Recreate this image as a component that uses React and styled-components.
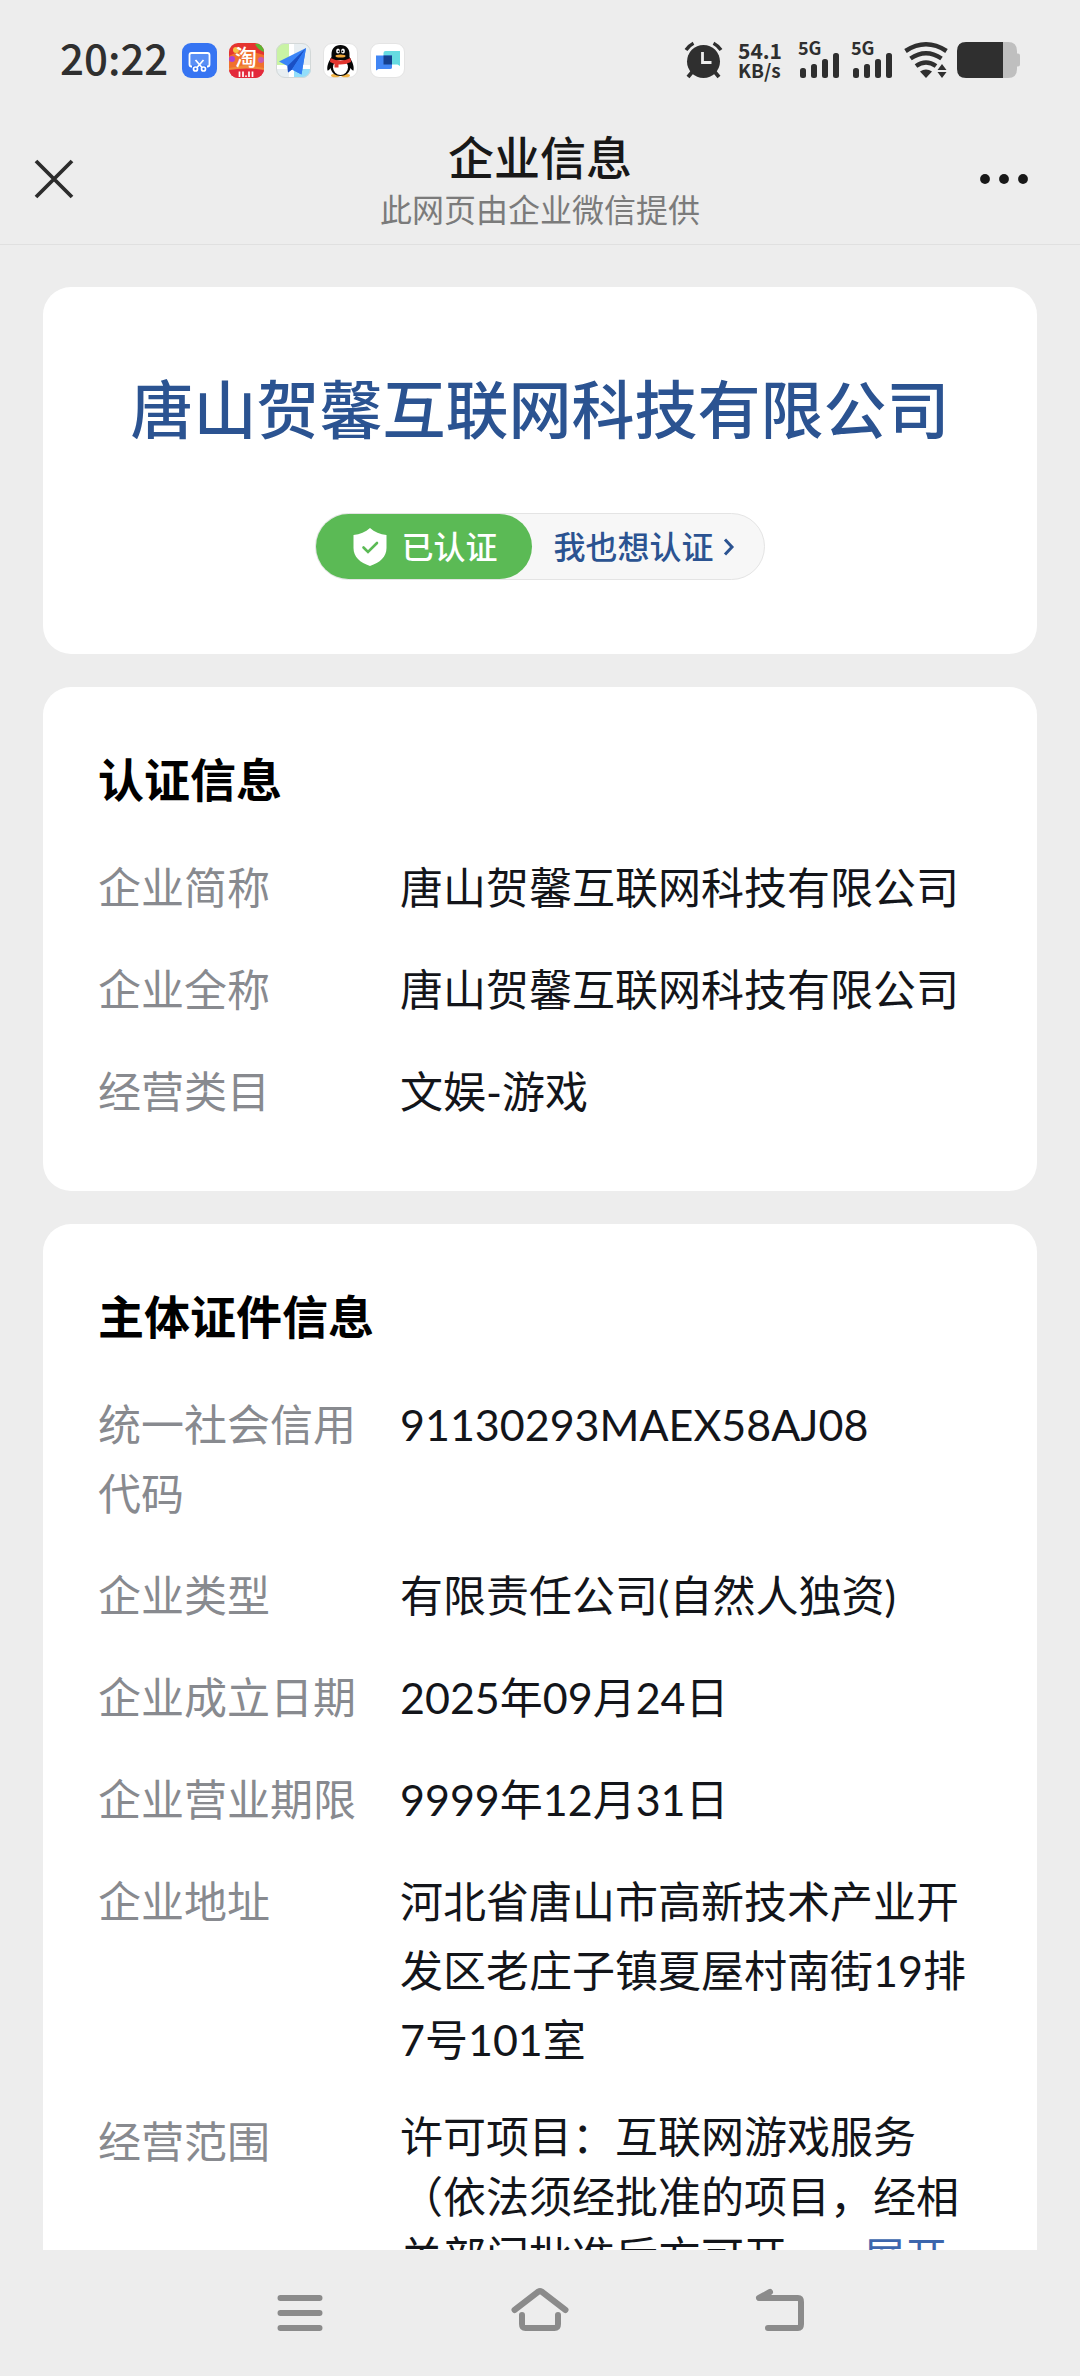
import React from "react"
import styled, { createGlobalStyle } from "styled-components"

const certRows = [
  { label: "企业简称", value: "唐山贺馨互联网科技有限公司" },
  { label: "企业全称", value: "唐山贺馨互联网科技有限公司" },
  { label: "经营类目", value: "文娱-游戏" }
]

const licenseRows = [
  { label: "统一社会信用代码", value: "91130293MAEX58AJ08" },
  { label: "企业类型", value: "有限责任公司(自然人独资)" },
  { label: "企业成立日期", value: "2025年09月24日" },
  { label: "企业营业期限", value: "9999年12月31日" },
  {
    label: "企业地址",
    value: "河北省唐山市高新技术产业开发区老庄子镇夏屋村南街19排7号101室"
  },
  {
    label: "经营范围",
    value:
      "许可项目：互联网游戏服务（依法须经批准的项目，经相关部门批准后方可开…",
    more: true
  }
]

export default function App() {
  return (
    <Screen>
      <GlobalStyle />
      <StatusBar>
        <Time>20:22</Time>
        <AppIcons>
          <ScreenshotIcon />
          <TaobaoIcon />
          <MapIcon />
          <QQIcon />
          <MeetingIcon />
        </AppIcons>
        <AlarmIcon />
        <NetSpeed>
          <span>54.1</span>
          <SpeedUnit>KB/s</SpeedUnit>
        </NetSpeed>
        <Signals>
          <SignalIcon />
          <SignalIcon />
          <WifiIcon />
        </Signals>
        <BatteryIcon />
      </StatusBar>

      <NavBar>
        <NavButton aria-label="关闭">
          <svg width="38" height="38" viewBox="0 0 38 38">
            <path d="M1 1 37 37M37 1 1 37" stroke="#2c2c2c" strokeWidth="3.8" />
          </svg>
        </NavButton>
        <Titles>
          <PageTitle>企业信息</PageTitle>
          <PageSource>此网页由企业微信提供</PageSource>
        </Titles>
        <NavButton aria-label="更多" $end>
          <svg width="50" height="12" viewBox="0 0 50 12" fill="#181818">
            <circle cx="6" cy="6" r="4.9" />
            <circle cx="25" cy="6" r="4.9" />
            <circle cx="44" cy="6" r="4.9" />
          </svg>
        </NavButton>
      </NavBar>

      <Content>
        <CompanyCard>
          <CompanyName>唐山贺馨互联网科技有限公司</CompanyName>
          <VerifyPill>
            <Verified>
              <ShieldIcon />
              已认证
            </Verified>
            <VerifyLink href="#verify">
              我也想认证
              <svg width="10" height="18" viewBox="0 0 10 18" fill="none">
                <path d="M1 1.5 8 9 1 16.5" stroke="#2b5391" strokeWidth="3" />
              </svg>
            </VerifyLink>
          </VerifyPill>
        </CompanyCard>
        <InfoSection title="认证信息" rows={certRows} />
        <InfoSection title="主体证件信息" rows={licenseRows} />
      </Content>

      <SystemNav>
        <SystemButton aria-label="最近任务">
          <svg width="60" height="48" viewBox="0 0 60 48">
            <path d="M10.500 9H49.500M10.500 24H49.500M10.500 39H49.500" />
          </svg>
        </SystemButton>
        <SystemButton aria-label="主屏幕">
          <svg width="60" height="48" viewBox="0 0 60 48">
            <path d="M4.500 21 28.500 2.500Q30 1.500 31.500 2.500L55.500 21" />
            <path d="M12 26V35Q12 39 15.500 39H44.500Q48 39 48 35V26" />
          </svg>
        </SystemButton>
        <SystemButton aria-label="返回">
          <svg width="60" height="48" viewBox="0 0 60 48">
            <path d="M20 3 9 9H48Q51 9 51 13V35Q51 39 48 39H18" />
          </svg>
        </SystemButton>
      </SystemNav>
    </Screen>
  )
}

function InfoSection({ title, rows }) {
  return (
    <InfoCard>
      <SectionTitle>{title}</SectionTitle>
      <Rows>
        {rows.map(row => (
          <Row key={row.label}>
            <Label>{row.label}</Label>
            <Value $dense={row.more}>
              {row.value}
              {row.more && <MoreLink href="#scope">展开</MoreLink>}
            </Value>
          </Row>
        ))}
      </Rows>
    </InfoCard>
  )
}

function ShieldIcon() {
  return (
    <svg width="34" height="38" viewBox="0 0 34 38">
      <path
        d="M17 0C21.500 4 27 6.500 33.500 7V20C33.500 29 27 34.500 17 38 7 34.500.5 29 .5 20V7C7 6.500 12.500 4 17 0Z"
        fill="#fff"
      />
      <path
        d="M10.500 19.500 15 24 24 15"
        fill="none"
        stroke="#5bba55"
        strokeWidth="2.600"
        strokeLinecap="round"
      />
    </svg>
  )
}

function ScreenshotIcon() {
  return (
    <svg width="35" height="35" viewBox="0 0 35 35">
      <rect width="35" height="35" rx="9" fill="#3674f2" />
      <rect x="8" y="10.500" width="19" height="12" fill="#5a8ff5" />
      <path
        d="M10 23.500H9.500Q7.500 23.500 7.500 21.500V12Q7.500 10 9.500 10H25.500Q27.500 10 27.500 12V21.500Q27.500 23.500 25.500 23.500H25"
        fill="none"
        stroke="#fff"
        strokeWidth="1.800"
      />
      <g fill="none" stroke="#fff" strokeWidth="1.700">
        <path d="M13.500 17 20 24.500M21.500 17 15 24.500" />
        <circle cx="13.500" cy="26" r="2" />
        <circle cx="21.500" cy="26" r="2" />
      </g>
    </svg>
  )
}

function TaobaoIcon() {
  return (
    <svg width="35" height="35" viewBox="0 0 35 35">
      <defs>
        <clipPath id="tb">
          <rect width="35" height="35" rx="9" />
        </clipPath>
      </defs>
      <g clipPath="url(#tb)">
        <rect width="35" height="35" fill="#e5342f" />
        <path d="M0 13 14 6 35 12V26H0Z" fill="#f0702d" />
        <circle cx="7" cy="7" r="3" fill="#f6c445" />
        <path d="M26 1 35 0V9Q29 7 26 1Z" fill="#5cb531" />
        <circle cx="3" cy="16" r="3" fill="#b13fd0" />
        <circle cx="32" cy="17" r="3" fill="#c95bb0" />
        <path d="M0 25 17 22 35 25V28H0Z" fill="#f08b3a" />
        <path d="M0 27Q17 24 35 27V35H0Z" fill="#e32a3c" />
      </g>
      <IconText x="17" y="22" fontSize="22">
        淘
      </IconText>
      <path
        d="M10.500 28.500V34M14 28.500V34M20 28.500V34M23.500 28.500V34"
        stroke="#fff"
        strokeWidth="1.700"
      />
      <circle cx="17" cy="33.2" r=".9" fill="#fff" />
    </svg>
  )
}

function MapIcon() {
  return (
    <svg width="35" height="35" viewBox="0 0 35 35">
      <defs>
        <clipPath id="map">
          <rect width="35" height="35" rx="9" />
        </clipPath>
      </defs>
      <g clipPath="url(#map)">
        <rect width="35" height="35" fill="#e8eef1" />
        <path d="M0 0H13V22H0Z" fill="#c9f3a4" />
        <path d="M18 26H35V35H18Z" fill="#93defa" />
        <path d="M13 0H18V35H13Z" fill="#fff" />
        <path d="M0 22H35V26H0Z" fill="#fff" />
        <path d="M30 5 3 18.500 11.500 23 12 29.500 16 26.500 25.500 31.500Z" fill="#3a84f7" />
        <path d="M30 5 11.500 23 12 29.500 16 26.500Z" fill="#1a4fc4" />
        <path d="M30 5 16 26.500 25.500 31.500Z" fill="#327bf3" />
      </g>
      <rect x=".5" y=".5" width="34" height="34" rx="8.500" fill="none" stroke="#d3d8d8" />
    </svg>
  )
}

function QQIcon() {
  return (
    <svg width="35" height="35" viewBox="0 0 35 35">
      <rect x=".5" y=".5" width="34" height="34" rx="8.500" fill="#fff" stroke="#e4e4e4" />
      <ellipse cx="12.500" cy="32.500" rx="4.500" ry="1.800" fill="#f2b445" />
      <ellipse cx="22.500" cy="32.500" rx="4.500" ry="1.800" fill="#f2b445" />
      <path
        d="M17.500 2C11.500 2 8.500 6 8.500 11V14C6 18 3.500 23 4.500 27.500 5.500 28 6.500 26.500 7.500 25 8.500 30 12.500 33 17.500 33S26.500 30 27.500 25C28.500 26.500 29.500 28 30.500 27.500 31.500 23 29 18 26.500 14V11C26.500 6 23.500 2 17.500 2Z"
        fill="#070707"
      />
      <ellipse cx="17.500" cy="24.500" rx="7.500" ry="7.500" fill="#fff" />
      <ellipse cx="15" cy="8" rx="1.900" ry="2.600" fill="#fff" />
      <ellipse cx="20" cy="8" rx="1.900" ry="2.600" fill="#fff" />
      <circle cx="15.500" cy="8.300" r=".9" fill="#000" />
      <circle cx="19.500" cy="8.300" r=".9" fill="#000" />
      <ellipse cx="17.500" cy="13" rx="5" ry="1.500" fill="#f2a93b" />
      <path d="M7.500 15Q17.500 20 27.500 15L28 19Q22 22 15.500 21.500V24.500H11.500V21L7 19Z" fill="#e2352f" />
    </svg>
  )
}

function MeetingIcon() {
  return (
    <svg width="35" height="35" viewBox="0 0 35 35">
      <rect x=".5" y=".5" width="34" height="34" rx="8.500" fill="#fff" stroke="#e4e4e4" />
      <path d="M13.500 10Q13.500 8 15.500 8H30V23L27.500 21.500H13.500Z" fill="#66dbe1" />
      <path d="M6 12.500H22V24.500Q22 26 20 26H8.500L6 27.500Z" fill="#4186f4" />
      <path d="M13.500 12.500H22V21.500H13.500Z" fill="#15408e" />
    </svg>
  )
}

function AlarmIcon() {
  return (
    <svg width="37" height="36" viewBox="0 0 37 36">
      <circle cx="18.500" cy="19.500" r="16.500" fill="#2f2f2f" />
      <g fill="none" stroke="#2f2f2f" strokeWidth="3.400">
        <path d="M1 8Q4 3.500 8.500 1.200M28.500 1.200Q33 3.500 36 8" />
        <path d="M8 29 3 35M29 29 34 35" strokeWidth="3.800" />
      </g>
      <path d="M17.500 10V20.500H26.500" fill="none" stroke="#ededed" strokeWidth="2.800" />
    </svg>
  )
}

function SignalIcon() {
  return (
    <svg width="42" height="36" viewBox="0 0 42 36" fill="#2f2f2f">
      <SignalText x="0" y="13">
        5G
      </SignalText>
      <rect x="2" y="26" width="6" height="10" rx="2.500" />
      <rect x="13" y="22" width="6" height="14" rx="2.500" />
      <rect x="24" y="17" width="6" height="19" rx="2.500" />
      <rect x="35" y="11" width="6" height="25" rx="2.500" />
    </svg>
  )
}

function WifiIcon() {
  return (
    <svg width="44" height="36" viewBox="0 0 44 36">
      <g fill="none" stroke="#2f2f2f" strokeWidth="4.500">
        <path d="M1.500 9Q22-4.500 42.500 9" />
        <path d="M6.500 16.500Q22 6 37.500 16.500" />
        <path d="M12 24Q22 17 32 24" />
      </g>
      <path d="M16 29.500Q22 25.500 28 29.500L22 36Z" fill="#2f2f2f" />
      <path d="M38 22 42.500 28H33.500ZM38 36 33.500 30H42.500Z" fill="#2f2f2f" />
    </svg>
  )
}

function BatteryIcon() {
  return (
    <svg width="63" height="36" viewBox="0 0 63 36">
      <path d="M46 0H51Q60 0 60 9V11.500H61Q63 11.500 63 13.500V22.500Q63 24.500 61 24.500H60V27Q60 36 51 36H46Z" fill="#bfbfbf" />
      <path d="M9 0H46V36H9Q0 36 0 27V9Q0 0 9 0Z" fill="#2f2f2f" />
    </svg>
  )
}

const GlobalStyle = createGlobalStyle`
  * {
    box-sizing: border-box;
  }

  body {
    margin: 0;
    background: #ededed;
    font-family: Lato, "Noto Sans CJK SC", sans-serif;
  }

  h1, h2, p, dl, dd {
    margin: 0;
    font-weight: inherit;
  }

  svg {
    display: block;
    flex: none;
    overflow: visible;
  }
`

const Screen = styled.div`
  display: flex;
  flex-direction: column;
  height: 100vh;
  background: #ededed;
`

const StatusBar = styled.div`
  display: flex;
  align-items: center;
  flex: none;
  height: 120px;
  padding: 0 60px;
  color: #2f2f2f;
`

const Time = styled.span`
  font-family: "Noto Sans CJK SC", sans-serif;
  font-size: 42px;
  font-weight: 500;
  line-height: 56px;
  padding-bottom: 6px;
`

const AppIcons = styled.div`
  display: flex;
  gap: 12px;
  margin: 0 auto 0 14px;
`

const IconText = styled.text`
  font-family: "Noto Sans CJK SC", sans-serif;
  font-weight: 500;
  text-anchor: middle;
  fill: #fff;
`

const NetSpeed = styled.div`
  display: flex;
  flex-direction: column;
  width: 44px;
  margin: 0 16px;
  font-family: "Noto Sans CJK SC", sans-serif;
  font-size: 21px;
  font-weight: 700;
  line-height: 20px;
  white-space: nowrap;
`

const SpeedUnit = styled.span`
  font-size: 19px;
`

const Signals = styled.div`
  display: flex;
  gap: 11px;
  margin-right: 9px;
`

const SignalText = styled.text`
  font-family: "Noto Sans CJK SC", sans-serif;
  font-size: 18px;
  font-weight: 700;
`

const NavBar = styled.header`
  display: flex;
  align-items: center;
  flex: none;
  height: 125px;
  padding: 0 51px 0 35px;
  border-bottom: 1px solid #e0e0e0;
`

const NavButton = styled.button`
  display: flex;
  flex: none;
  justify-content: ${props => (props.$end ? "flex-end" : "flex-start")};
  width: ${props => (props.$end ? "64px" : "80px")};
  padding: 0 0 6px;
  border: none;
  background: none;
`

const Titles = styled.div`
  flex: 1;
  padding-bottom: 4px;
  text-align: center;
`

const PageTitle = styled.h1`
  font-size: 46px;
  font-weight: 500;
  line-height: 60px;
  color: #181818;
`

const PageSource = styled.p`
  font-size: 32px;
  line-height: 44px;
  color: #7b7b7b;
`

const Content = styled.main`
  display: flex;
  flex-direction: column;
  flex: 1;
  gap: 33px;
  min-height: 0;
  padding: 42px 43px 0;
  overflow: hidden;
`

const Card = styled.section`
  flex: none;
  border-radius: 28px;
  background: #fff;
`

const CompanyCard = styled(Card)`
  display: flex;
  flex-direction: column;
  align-items: center;
  padding: 77px 40px 74px;
`

const CompanyName = styled.h2`
  font-size: 63px;
  font-weight: 500;
  line-height: 90px;
  color: #2b5391;
`

const VerifyPill = styled.div`
  display: flex;
  height: 67px;
  margin-top: 59px;
  border: 1px solid #e4e4e4;
  border-radius: 34px;
  background: #f7f7f7;
  font-size: 32px;
  font-weight: 500;
  line-height: 65px;
`

const Verified = styled.span`
  display: flex;
  align-items: center;
  gap: 14px;
  padding: 0 34px 0 37px;
  border-radius: 33px;
  background: #5bba55;
  color: #fff;
`

const VerifyLink = styled.a`
  display: flex;
  align-items: center;
  gap: 10px;
  padding: 0 30px 0 22px;
  color: #2b5391;
  text-decoration: none;
`

const InfoCard = styled(Card)`
  padding: 60px 55px 65px;
`

const SectionTitle = styled.h2`
  margin-bottom: 40px;
  font-size: 46px;
  font-weight: 700;
  line-height: 66px;
  color: #000;
`

const Rows = styled.dl`
  display: flex;
  flex-direction: column;
  gap: 33px;
`

const Row = styled.div`
  display: flex;
  gap: 42px;
  font-size: 43px;
  line-height: 69px;
`

const Label = styled.dt`
  flex: none;
  width: 260px;
  color: #888a8f;
`

const Value = styled.dd`
  flex: 1;
  line-height: ${props => (props.$dense ? "60px" : "69px")};
  color: #13151a;
`

const MoreLink = styled.a`
  margin-left: 44px;
  font-size: 42px;
  color: #3c66ad;
  text-decoration: none;
`

const SystemNav = styled.nav`
  display: flex;
  flex: none;
  height: 126px;
  padding: 0 calc(100% / 6);
`

const SystemButton = styled.button`
  display: flex;
  flex: 1;
  align-items: center;
  justify-content: center;
  padding: 0;
  border: none;
  background: none;

  path {
    fill: none;
    stroke: #8b8b8b;
    stroke-width: 6;
    stroke-linecap: round;
    stroke-linejoin: round;
  }
`
